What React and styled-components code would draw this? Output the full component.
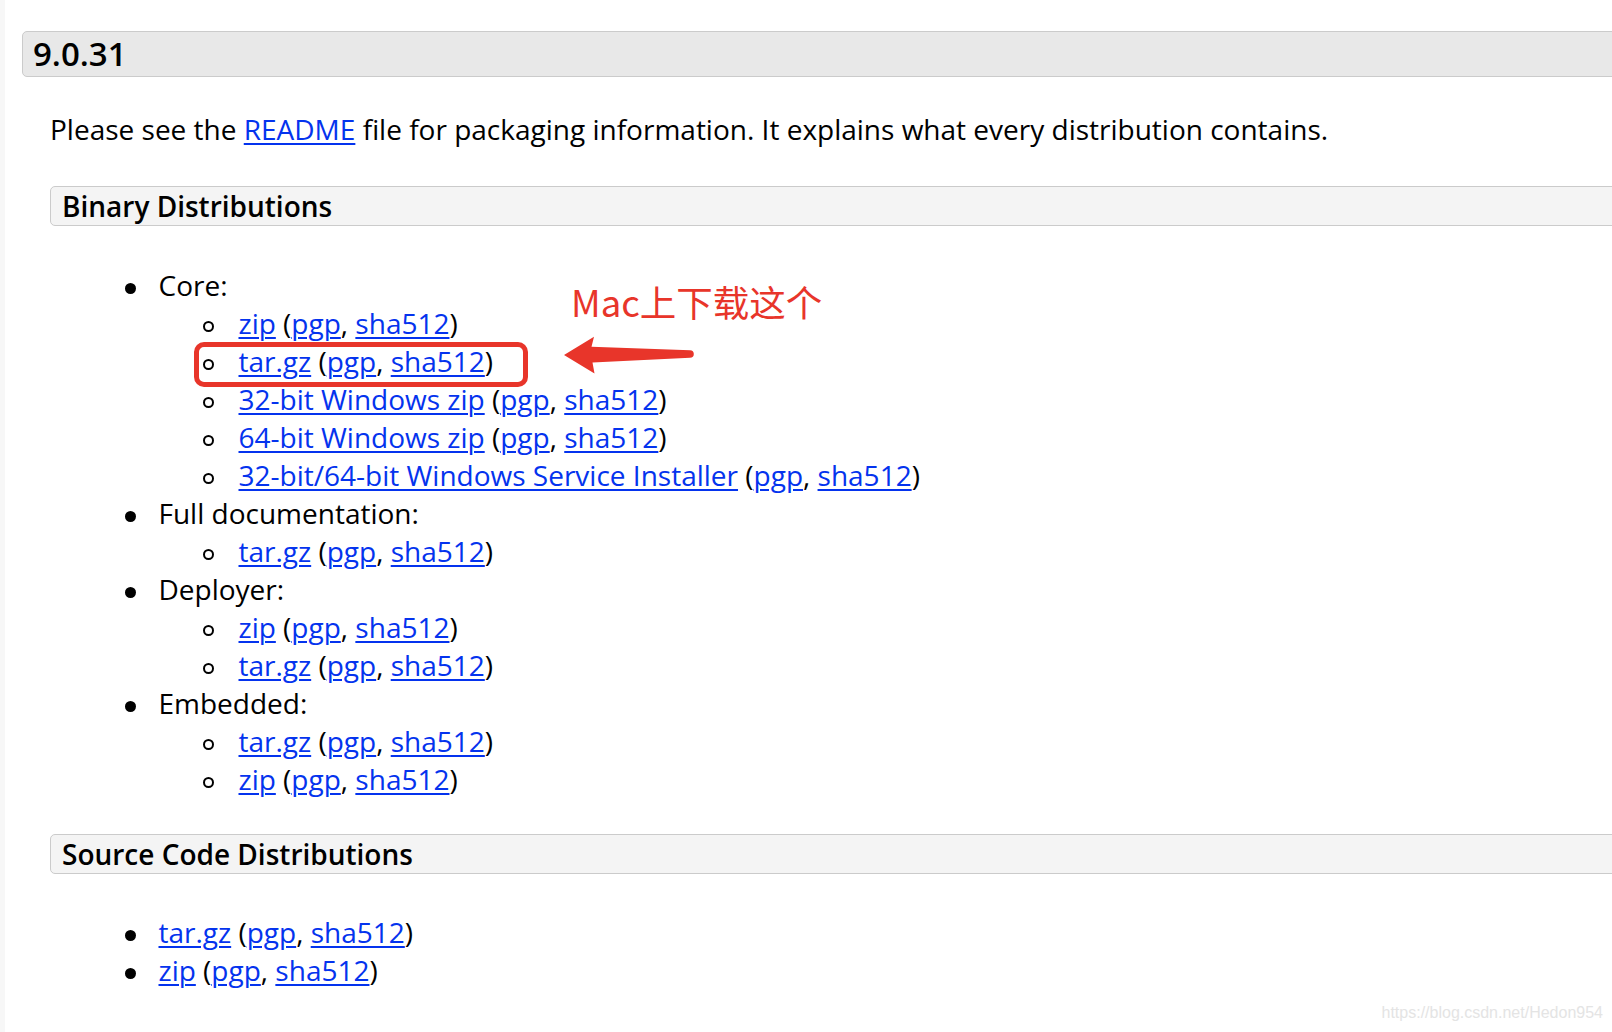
import React from "react";
import styled, { createGlobalStyle } from "styled-components";

const GlobalStyle = createGlobalStyle`
  html, body {
    margin: 0;
    padding: 0;
    background: #ffffff;
    overflow: hidden;
  }
  body {
    font-family: "Open Sans", "Noto Sans", sans-serif;
    color: #000000;
  }
`;

const core = [
  { label: "zip" },
  { label: "tar.gz" },
  { label: "32-bit Windows zip" },
  { label: "64-bit Windows zip" },
  { label: "32-bit/64-bit Windows Service Installer" },
];

const groups = [
  { name: "Core:", files: core },
  { name: "Full documentation:", files: [{ label: "tar.gz" }] },
  { name: "Deployer:", files: [{ label: "zip" }, { label: "tar.gz" }] },
  { name: "Embedded:", files: [{ label: "tar.gz" }, { label: "zip" }] },
];

const sources = ["tar.gz", "zip"];

const Download = ({ label }) => (
  <>
    <Link href="#">{label}</Link> (<Link href="#">pgp</Link>,{" "}
    <Link href="#">sha512</Link>)
  </>
);

const App = () => {
  return (
    <Page>
      <GlobalStyle />
      <Version>9.0.31</Version>
      <Para>
        Please see the <Link href="#">README</Link> file for packaging
        information. It explains what every distribution contains.
      </Para>

      <SubHeading>Binary Distributions</SubHeading>
      <List>
        {groups.map((group) => (
          <Item key={group.name}>
            <Disc />
            <div>
              {group.name}
              <SubList>
                {group.files.map((file, i) => (
                  <SubItem key={i}>
                    <Circle />
                    <span>
                      <Download label={file.label} />
                    </span>
                  </SubItem>
                ))}
              </SubList>
            </div>
          </Item>
        ))}
      </List>

      <SubHeading $top={36}>Source Code Distributions</SubHeading>
      <List $top={39}>
        {sources.map((s) => (
          <Item key={s}>
            <Disc />
            <span>
              <Download label={s} />
            </span>
          </Item>
        ))}
      </List>

      <Note>Mac上下载这个</Note>
      <Highlight />
      <Arrow width="134" height="42" viewBox="0 0 134 42">
        <path
          d="M3 21 L33 2.7 L30.5 12.8 L129 16.2 A3.8 3.8 0 0 1 129 23.8 L31.5 28.4 L33.5 39.4 Z"
          fill="#e8352a"
        />
      </Arrow>
      <Watermark>https://blog.csdn.net/Hedon954</Watermark>
    </Page>
  );
};

const Page = styled.div`
  position: relative;
  height: 1032px;
  box-sizing: border-box;
  border-left: 5px solid #f7f7f7;
  padding-top: 31px;
  display: flex;
  flex-direction: column;
  font-size: 28px;
  line-height: 38px;
`;

const Version = styled.h3`
  margin: 0 -40px 0 17px;
  height: 46px;
  box-sizing: border-box;
  display: flex;
  align-items: center;
  padding-left: 10px;
  background: #e8e8e8;
  border: 1.5px solid #cbcbcb;
  border-radius: 5px;
  font-size: 33px;
  font-weight: 600;
`;

const Para = styled.p`
  margin: 33px 0 0 45px;
  font-size: 28px;
  line-height: 38px;
`;

const Link = styled.a`
  color: #0433ee;
  text-decoration: underline;
  text-underline-offset: 3px;
  text-decoration-thickness: 1.5px;
`;

const SubHeading = styled.h4`
  margin: ${(p) => p.$top ?? 38}px -40px 0 45px;
  height: 40px;
  box-sizing: border-box;
  display: flex;
  align-items: center;
  padding-left: 11px;
  background: #f4f4f4;
  border: 1.5px solid #cbcbcb;
  border-radius: 5px;
  font-size: 28px;
  font-weight: 600;
`;

const List = styled.ul`
  list-style: none;
  margin: ${(p) => p.$top ?? 40}px 0 0 119.5px;
  padding: 0;
`;

const Item = styled.li`
  display: flex;
  align-items: flex-start;
`;

const Disc = styled.span`
  flex: none;
  width: 11px;
  height: 11px;
  margin: 17px 23px 0 0;
  border-radius: 50%;
  background: #000000;
`;

const SubList = styled.ul`
  list-style: none;
  margin: 0 0 0 44.5px;
  padding: 0;
`;

const SubItem = styled.li`
  display: flex;
  align-items: flex-start;
`;

const Circle = styled.span`
  flex: none;
  width: 11px;
  height: 11px;
  box-sizing: border-box;
  margin: 17px 24.5px 0 0;
  border: 2px solid #000000;
  border-radius: 50%;
`;

const Note = styled.div`
  position: absolute;
  left: 566px;
  top: 280px;
  font-family: "Noto Sans CJK SC", "Noto Sans", sans-serif;
  font-size: 36.5px;
  font-weight: 400;
  line-height: 44px;
  color: #e8352a;
  white-space: nowrap;
`;

const Highlight = styled.div`
  position: absolute;
  left: 189px;
  top: 342px;
  width: 334px;
  height: 45px;
  box-sizing: border-box;
  border: 5px solid #e8352a;
  border-radius: 10px;
`;

const Arrow = styled.svg`
  position: absolute;
  left: 556px;
  top: 334px;
`;

const Watermark = styled.div`
  position: absolute;
  right: 9px;
  top: 1002px;
  font-family: "Liberation Sans", Arial, sans-serif;
  font-size: 16px;
  line-height: 22px;
  color: #e4e4e4;
`;

export default App;
